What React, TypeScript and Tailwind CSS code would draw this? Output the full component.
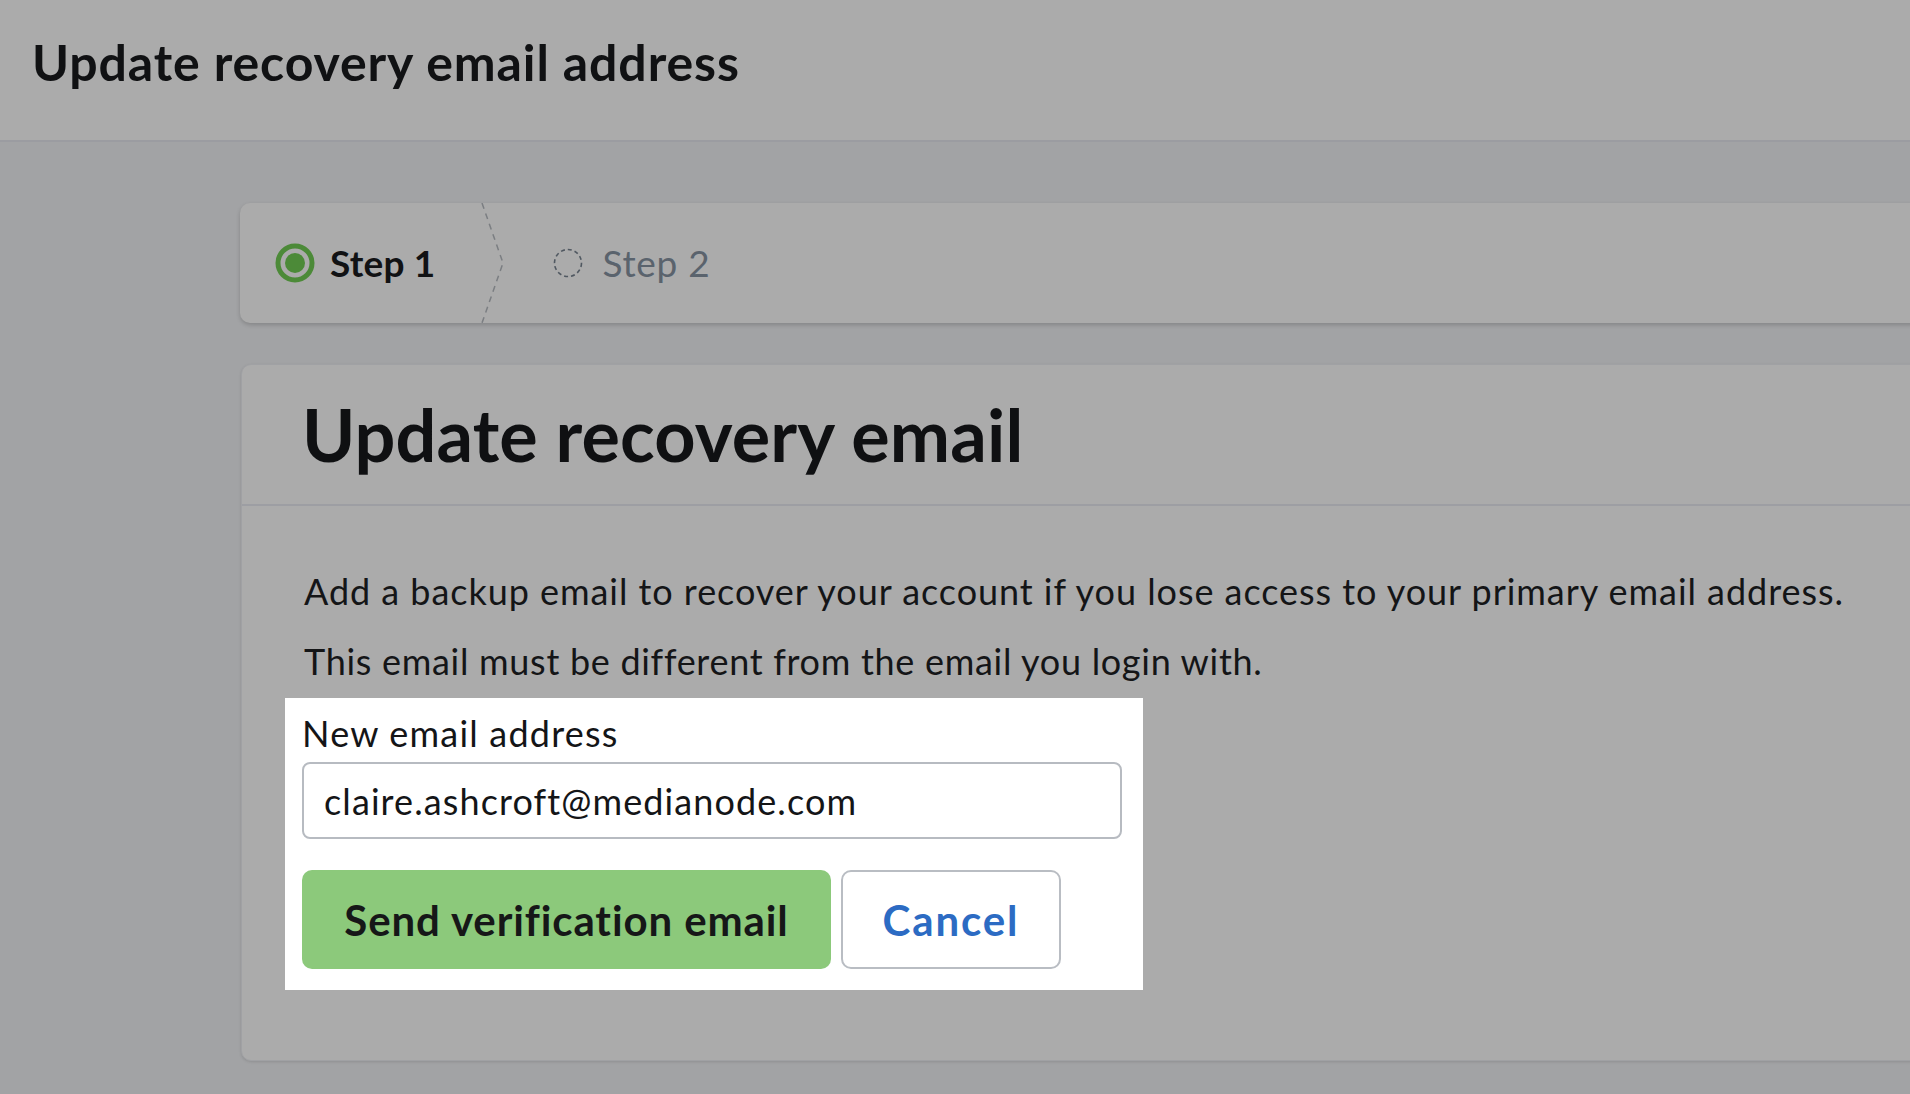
import React from "react";

function StepDone() {
  return (
    <svg width="40" height="40" viewBox="0 0 40 40" className="shrink-0">
      <circle cx="20" cy="20" r="17" fill="none" stroke="#4c8a38" strokeWidth="5" />
      <circle cx="20" cy="20" r="10" fill="#4c8a38" />
    </svg>
  );
}

function StepPending() {
  return (
    <svg width="30" height="30" viewBox="0 0 30 30" className="shrink-0">
      <circle cx="15" cy="15" r="13.5" fill="none" stroke="#505861" strokeWidth="1.6" strokeDasharray="4 3" />
    </svg>
  );
}

function Chevron() {
  return (
    <svg width="24" height="120" viewBox="0 0 24 120" className="shrink-0">
      <path d="M1 0 L22 60 L1 120" fill="none" stroke="#7b7e82" strokeWidth="1.5" strokeDasharray="6 5" />
    </svg>
  );
}

export default function App() {
  return (
    <div
      className="w-full h-[1094px] overflow-hidden bg-[#a2a3a5] text-[#121315]"
      style={{ fontFamily: "Lato, 'Open Sans', sans-serif" }}
    >
      <header className="h-[142px] bg-[#ababab] border-b-2 border-[#9b9ca1] pl-[32px] pt-[32px]">
        <h1 className="text-[50px] leading-[60px] font-bold tracking-[0.9px] text-[#101113]">
          Update recovery email address
        </h1>
      </header>

      <main className="pl-[240px] pt-[61px]">
        <div className="h-[120px] -mr-[20px] rounded-l-[10px] bg-[#ababab] shadow-[0_2px_4px_rgba(0,0,0,0.18)] flex items-center pl-[35px]">
          <StepDone />
          <span className="ml-[15px] text-[37px] font-bold text-[#111214] tracking-[0.2px]">Step 1</span>
          <div className="ml-[45px]">
            <Chevron />
          </div>
          <div className="ml-[48px]">
            <StepPending />
          </div>
          <span className="ml-[20px] text-[37px] text-[#5a636d] tracking-[0.7px]">Step 2</span>
        </div>

        <section className="mt-[41px] -mr-[20px] ml-[1px] h-[697px] rounded-l-[10px] bg-[#ababab] border border-[#a0a1a4] shadow-[0_1px_3px_rgba(0,0,0,0.12)]">
          <div className="h-[141px] border-b-2 border-[#9d9ea3] pl-[60px] pt-[26px]">
            <h2 className="text-[72px] leading-[86px] font-bold tracking-[0.15px] text-[#0f1012]">
              Update recovery email
            </h2>
          </div>
          <div className="pt-[63px]">
            <p className="pl-[62px] text-[36px] leading-[44px] tracking-[0.95px] text-[#141517]">
              Add a backup email to recover your account if you lose access to your primary email address.
            </p>
            <p className="pl-[62px] mt-[26px] text-[36px] leading-[44px] tracking-[0.7px] text-[#141517]">
              This email must be different from the email you login with.
            </p>
            <div className="mt-[15px] ml-[43px] w-[858px] bg-white pl-[17px] pr-[21px] pt-[13px] pb-[21px]">
              <label className="block text-[36px] leading-[44px] tracking-[1.2px] text-[#141517]">
                New email address
              </label>
              <div className="mt-[7px] h-[77px] rounded-[8px] border-2 border-[#b7bbc1] bg-white flex items-center px-[20px]">
                <span className="text-[36px] leading-[44px] tracking-[1.1px] text-[#141517]">
                  claire.ashcroft@medianode.com
                </span>
              </div>
              <div className="mt-[31px] flex gap-[10px]">
                <button className="w-[529px] h-[99px] rounded-[10px] bg-[#8cc97b] text-[42px] leading-[50px] font-bold tracking-[0.9px] text-[#161718]">
                  Send verification email
                </button>
                <button className="w-[220px] h-[99px] rounded-[10px] border-2 border-[#b9bdc3] bg-white text-[42px] leading-[50px] font-bold tracking-[1.9px] text-[#2c6bc3]">
                  Cancel
                </button>
              </div>
            </div>
          </div>
        </section>
      </main>
    </div>
  );
}
